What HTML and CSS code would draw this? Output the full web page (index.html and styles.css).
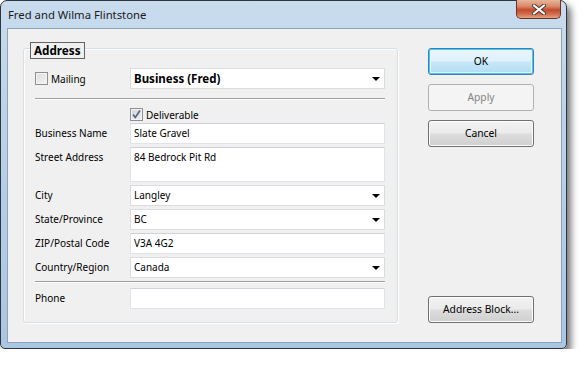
FILE: index.html
```html
<!DOCTYPE html>
<html lang="en">
<head>
    <meta charset="utf-8">
    <title>Fred and Wilma Flintstone</title>
    <link rel="stylesheet" href="styles.css">
</head>
<body>
<div class="window">
    <div class="titlebar">
        <span class="title">Fred and Wilma Flintstone</span>
        <div class="close">
            <svg width="16" height="11" viewBox="0 0 16 11">
                <path d="M3 1.5 L13 9.5 M13 1.5 L3 9.5" stroke="#4a3a36" stroke-width="4" stroke-linecap="round"/>
                <path d="M3 1.5 L13 9.5 M13 1.5 L3 9.5" stroke="#ffffff" stroke-width="2.2" stroke-linecap="round"/>
            </svg>
        </div>
    </div>
    <div class="client">
        <div class="group">
            <div class="legend">Address</div>

            <div class="row first">
                <label class="chk-label"><span class="chk"></span>Mailing</label>
                <div class="combo bold">Business (Fred)<span class="arrow"></span></div>
            </div>

            <div class="sep top"></div>

            <div class="row check-row">
                <span class="label"></span>
                <label class="chk-label"><span class="chk checked">
                    <svg width="11" height="11" viewBox="0 0 11 11"><path d="M2 5.5 L4.3 8.5 L9 1.5" fill="none" stroke="#4d6185" stroke-width="1.6"/></svg>
                </span>Deliverable</label>
            </div>

            <div class="row">
                <span class="label">Business Name</span>
                <div class="field">Slate Gravel</div>
            </div>
            <div class="row">
                <span class="label">Street Address</span>
                <div class="field tall">84 Bedrock Pit Rd</div>
            </div>
            <div class="row">
                <span class="label">City</span>
                <div class="combo">Langley<span class="arrow"></span></div>
            </div>
            <div class="row">
                <span class="label">State/Province</span>
                <div class="combo">BC<span class="arrow"></span></div>
            </div>
            <div class="row">
                <span class="label">ZIP/Postal Code</span>
                <div class="field">V3A 4G2</div>
            </div>
            <div class="row">
                <span class="label">Country/Region</span>
                <div class="combo">Canada<span class="arrow"></span></div>
            </div>

            <div class="sep bottom"></div>

            <div class="row last">
                <span class="label">Phone</span>
                <div class="field"></div>
            </div>
        </div>

        <div class="buttons">
            <div class="btn default">OK</div>
            <div class="btn disabled">Apply</div>
            <div class="btn">Cancel</div>
            <div class="btn push-down">Address Block...</div>
        </div>
    </div>
</div>
</body>
</html>
```

FILE: styles.css
```css
body{
    margin: 0;
    background: #ffffff;
    font-family: "Segoe UI", "Noto Sans", sans-serif;
    font-size: 10px;
    color: #000000;
}
.window{
    width: 567px;
    height: 349px;
    box-sizing: border-box;
    border: 1px solid #30363d;
    border-radius: 7px 7px 5px 5px;
    padding: 0 4px 5px 6px;
    background: linear-gradient(180deg, #c9dcee 0%, #bcd3ea 30%, #a9c6e3 100%);
    box-shadow: 4px 5px 7px rgba(0,0,0,0.55);
}
.titlebar{
    height: 27px;
    display: flex;
    justify-content: space-between;
    align-items: flex-start;
}
.title{
    padding: 6px 0 0 1px;
    font-size: 11.3px;
    color: #1a1a1a;
}
.close{
    width: 45px;
    height: 19px;
    margin: -1px 1px 0 0;
    box-sizing: border-box;
    border: 1px solid #6b3123;
    border-top: none;
    border-radius: 0 0 5px 5px;
    background: linear-gradient(180deg, #e9b59a 0%, #d88a69 35%, #c24a2d 55%, #d2714f 80%, #e6a383 100%);
    display: flex;
    align-items: center;
    justify-content: center;
}
.client{
    height: 315px;
    box-sizing: border-box;
    border: 1px solid #8fa3b7;
    background: #f0f0f0;
    padding: 19px 0 0 15px;
    display: flex;
    gap: 30px;
}
.group{
    width: 375px;
    height: 275px;
    box-sizing: border-box;
    border: 1px solid #d5dfe5;
    border-radius: 3px;
    box-shadow: inset 1px 1px 0 #ffffff, 1px 1px 0 #ffffff;
    padding: 0 12px 0 11px;
}
.legend{
    display: block;
    width: fit-content;
    margin: -7px 0 0 -5px;
    height: 17px;
    box-sizing: border-box;
    border: 1px solid #646464;
    padding: 0 3px 0 3px;
    font-weight: bold;
    font-size: 11.7px;
    line-height: 15px;
    background: #f0f0f0;
}
.row{
    display: flex;
    align-items: center;
    margin-bottom: 3px;
}
.row.first{
    margin-top: 9px;
    margin-bottom: 0;
}
.row.last{
    margin-bottom: 0;
}
.label,
.row.first .chk-label{
    width: 95px;
    flex: none;
}
.row .label{
    align-self: flex-start;
    line-height: 21px;
}
.check-row{
    height: 13px;
    margin-bottom: 2px;
}
.chk-label{
    display: flex;
    align-items: center;
    gap: 3px;
}
.chk{
    width: 13px;
    height: 13px;
    box-sizing: border-box;
    border: 1px solid #8e8f8f;
    background: linear-gradient(135deg, #dcdcdc 0%, #f4f4f4 100%);
    box-shadow: inset 0 0 0 1px #f4f4f4;
    display: flex;
    align-items: center;
    justify-content: center;
}
.chk.checked{
    background: linear-gradient(135deg, #d6d6d6 0%, #efefef 100%);
}
.field,
.combo{
    flex: 1;
    height: 21px;
    box-sizing: border-box;
    border: 1px solid #e2e3ea;
    border-top-color: #cfd2d8;
    background: #ffffff;
    padding: 0 3px;
    line-height: 19px;
    white-space: nowrap;
}
.field.tall{
    height: 35px;
}
.combo{
    position: relative;
    border-color: #dadce0;
}
.combo.bold{
    font-weight: bold;
    font-size: 11.5px;
}
.arrow{
    position: absolute;
    right: 4px;
    top: 8px;
    width: 0;
    height: 0;
    border-left: 4px solid transparent;
    border-right: 4px solid transparent;
    border-top: 4px solid #000000;
}
.sep{
    height: 2px;
    box-sizing: border-box;
    border-top: 1px solid #a0a0a0;
    border-bottom: 1px solid #ffffff;
}
.sep.top{
    margin: 9px 0 8px;
}
.sep.bottom{
    margin: 2px 0 5px;
}
.buttons{
    width: 106px;
    height: 275px;
    display: flex;
    flex-direction: column;
    gap: 9px;
}
.btn{
    height: 27px;
    box-sizing: border-box;
    border: 1px solid #707070;
    border-radius: 3px;
    background: linear-gradient(180deg, #f2f2f2 0%, #ebebeb 48%, #dddddd 52%, #cfcfcf 100%);
    box-shadow: inset 0 0 0 1px #fcfcfc;
    text-align: center;
    font-size: 10.3px;
    line-height: 25px;
}
.btn.default{
    border-color: #3c7fb1;
    background: linear-gradient(180deg, #e9f5fc 0%, #dff1fb 48%, #c6e7f7 52%, #b2dcf2 100%);
    box-shadow: inset 0 0 0 1px #48c6f4, inset 0 0 0 2px #e8f6fd;
}
.btn.disabled{
    border-color: #adb2b5;
    background: #f4f4f4;
    color: #838383;
    box-shadow: none;
}
.btn.push-down{
    margin-top: auto;
}
```
